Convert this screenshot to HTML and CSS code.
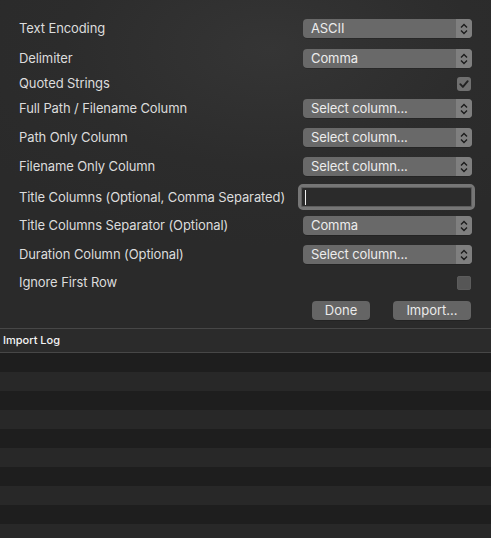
FILE: index.html
```html
<!DOCTYPE html>
<html>
<head>
<meta charset="utf-8">
<link rel="stylesheet" href="styles.css">
</head>
<body>
<div class="window">
  <div class="form">
    <div class="row r1"><span class="label">Text Encoding</span>
      <div class="popup"><span class="ptext">ASCII</span><span class="step"><svg width="8" height="12" viewBox="0 0 8 12"><path d="M1 4.5 L4 1.5 L7 4.5 M1 7.5 L4 10.5 L7 7.5" fill="none" stroke="#1c1c1c" stroke-width="1.4"/></svg></span></div></div>
    <div class="row r2"><span class="label">Delimiter</span>
      <div class="popup"><span class="ptext">Comma</span><span class="step"><svg width="8" height="12" viewBox="0 0 8 12"><path d="M1 4.5 L4 1.5 L7 4.5 M1 7.5 L4 10.5 L7 7.5" fill="none" stroke="#1c1c1c" stroke-width="1.4"/></svg></span></div></div>
    <div class="row r3 cbrow"><span class="label">Quoted Strings</span>
      <div class="check on"><svg width="14" height="14" viewBox="0 0 14 14"><path d="M3.3 7.2 L5.9 9.9 L10.7 4.2" fill="none" stroke="#222" stroke-width="1.9" stroke-linecap="round" stroke-linejoin="round"/></svg></div></div>
    <div class="row r4"><span class="label">Full Path / Filename Column</span>
      <div class="popup"><span class="ptext">Select column...</span><span class="step"><svg width="8" height="12" viewBox="0 0 8 12"><path d="M1 4.5 L4 1.5 L7 4.5 M1 7.5 L4 10.5 L7 7.5" fill="none" stroke="#1c1c1c" stroke-width="1.4"/></svg></span></div></div>
    <div class="row r5"><span class="label">Path Only Column</span>
      <div class="popup"><span class="ptext">Select column...</span><span class="step"><svg width="8" height="12" viewBox="0 0 8 12"><path d="M1 4.5 L4 1.5 L7 4.5 M1 7.5 L4 10.5 L7 7.5" fill="none" stroke="#1c1c1c" stroke-width="1.4"/></svg></span></div></div>
    <div class="row r6"><span class="label">Filename Only Column</span>
      <div class="popup"><span class="ptext">Select column...</span><span class="step"><svg width="8" height="12" viewBox="0 0 8 12"><path d="M1 4.5 L4 1.5 L7 4.5 M1 7.5 L4 10.5 L7 7.5" fill="none" stroke="#1c1c1c" stroke-width="1.4"/></svg></span></div></div>
    <div class="row r7 fieldrow"><span class="label">Title Columns (Optional, Comma Separated)</span>
      <div class="field"><span class="caret"></span></div></div>
    <div class="row r8"><span class="label">Title Columns Separator (Optional)</span>
      <div class="popup"><span class="ptext">Comma</span><span class="step"><svg width="8" height="12" viewBox="0 0 8 12"><path d="M1 4.5 L4 1.5 L7 4.5 M1 7.5 L4 10.5 L7 7.5" fill="none" stroke="#1c1c1c" stroke-width="1.4"/></svg></span></div></div>
    <div class="row r9"><span class="label">Duration Column (Optional)</span>
      <div class="popup"><span class="ptext">Select column...</span><span class="step"><svg width="8" height="12" viewBox="0 0 8 12"><path d="M1 4.5 L4 1.5 L7 4.5 M1 7.5 L4 10.5 L7 7.5" fill="none" stroke="#1c1c1c" stroke-width="1.4"/></svg></span></div></div>
    <div class="row r10 cbrow"><span class="label">Ignore First Row</span>
      <div class="check off"></div></div>
    <div class="buttons">
      <div class="btn done">Done</div>
      <div class="btn import">Import...</div>
    </div>
  </div>
  <div class="log">
    <div class="loghead">Import Log</div>
    <div class="logbody"></div>
  </div>
</div>
</body>
</html>
```
FILE: styles.css
```css
html, body {
  margin: 0;
  padding: 0;
  width: 491px;
  height: 538px;
  overflow: hidden;
  background: #2a2a2a;
  font-family: "Inter", "Liberation Sans", sans-serif;
}
.window {
  display: flex;
  flex-direction: column;
  height: 538px;
}
.form {
  background: radial-gradient(ellipse 70% 60% at 55% 15%, #353535 0%, #2c2c2c 60%, #2a2a2a 100%);
  padding: 19px 19px 8px 19px;
  display: flex;
  flex-direction: column;
}
.row {
  display: flex;
  justify-content: space-between;
  align-items: center;
  height: 19px;
}
.cbrow { height: 14px; }
.cbrow .label { margin-top: -3px; }
.fieldrow { height: 26px; }
.r2 { margin-top: 11px; }
.r3 { margin-top: 9px; }
.r4 { margin-top: 8px; }
.r5 { margin-top: 10px; }
.r6 { margin-top: 10px; }
.r7 { margin-top: 8px; }
.r8 { margin-top: 6px; }
.r9 { margin-top: 10px; }
.r10 { margin-top: 12px; }
.label {
  color: #dcdcdc;
  font-size: 13px;
  letter-spacing: -0.1px;
  line-height: 16px;
  margin-top: -1px;
}
.popup {
  width: 169px;
  height: 19px;
  border-radius: 4px;
  background: #696969;
  display: flex;
  align-items: center;
  overflow: hidden;
  box-shadow: 0 0.5px 0 rgba(0,0,0,0.3);
}
.ptext {
  flex: 1;
  color: #ececec;
  font-size: 13px;
  letter-spacing: -0.1px;
  padding-left: 8px;
  line-height: 19px;
}
.step {
  width: 16px;
  height: 19px;
  background: #7f7f7f;
  display: flex;
  align-items: center;
  justify-content: center;
}
.check {
  width: 14px;
  height: 14px;
  border-radius: 3px;
  margin-right: 1px;
}
.check.on { background: #707070; }
.check.on svg { display: block; }
.check.off { background: #565656; box-shadow: inset 0 0 0 0.5px #626262; }
.field {
  width: 177px;
  height: 26px;
  box-sizing: border-box;
  margin-right: -3px;
  border: 3px solid #767676;
  border-radius: 5px;
  background: #2b2b2b;
  box-shadow: inset 0 0 0 1px #5e5e5e;
  display: flex;
  align-items: center;
  padding-left: 4px;
}
.caret {
  width: 1px;
  height: 15px;
  background: #f0f0f0;
}
.buttons {
  display: flex;
  justify-content: flex-end;
  gap: 23px;
  margin-top: 11px;
  padding-right: 1px;
}
.btn {
  height: 19px;
  line-height: 19px;
  border-radius: 4px;
  background: #656565;
  color: #eaeaea;
  font-size: 13px;
  text-align: center;
  box-shadow: 0 0.5px 0 rgba(0,0,0,0.3);
}
.done { width: 58px; }
.import { width: 78px; }
.log {
  flex: 1;
  display: flex;
  flex-direction: column;
  border-top: 1px solid #474747;
}
.loghead {
  height: 23px;
  line-height: 23px;
  background: #2b2b2b;
  color: #f4f4f4;
  font-size: 11px;
  font-weight: 500;
  padding-left: 3px;
  border-bottom: 1px solid #474747;
}
.logbody {
  flex: 1;
  background: repeating-linear-gradient(to bottom, #1e1e1e 0px, #1e1e1e 19px, #282828 19px, #282828 38px);
}
```
